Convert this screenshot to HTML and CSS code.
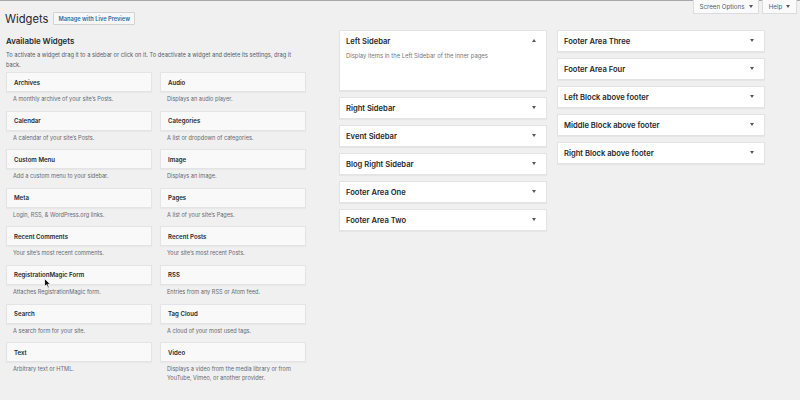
FILE: index.html
```html
<!DOCTYPE html>
<html>
<head>
<meta charset="utf-8">
<link rel="stylesheet" href="styles.css">
</head>
<body>
<div class="topline"></div>
<header class="header">
  <div class="title-group">
    <h1 class="page-title">Widgets</h1>
    <span class="live-btn">Manage with Live Preview</span>
  </div>
  <div class="meta-links">
    <span class="meta-btn screen-opt">Screen Options <i class="caret"></i></span>
    <span class="meta-btn help">Help <i class="caret"></i></span>
  </div>
</header>
<main class="layout">
  <section class="available">
    <h2 class="avail-title">Available Widgets</h2>
    <p class="avail-desc">To activate a widget drag it to a sidebar or click on it. To deactivate a widget and delete its settings, drag it back.</p>
    <div class="widget-grid">
      <div class="widget"><div class="w-card">Archives</div><div class="w-desc">A monthly archive of your site’s Posts.</div></div>
      <div class="widget"><div class="w-card">Audio</div><div class="w-desc">Displays an audio player.</div></div>
      <div class="widget"><div class="w-card">Calendar</div><div class="w-desc">A calendar of your site’s Posts.</div></div>
      <div class="widget"><div class="w-card">Categories</div><div class="w-desc">A list or dropdown of categories.</div></div>
      <div class="widget"><div class="w-card">Custom Menu</div><div class="w-desc">Add a custom menu to your sidebar.</div></div>
      <div class="widget"><div class="w-card">Image</div><div class="w-desc">Displays an image.</div></div>
      <div class="widget"><div class="w-card">Meta</div><div class="w-desc">Login, RSS, &amp; WordPress.org links.</div></div>
      <div class="widget"><div class="w-card">Pages</div><div class="w-desc">A list of your site’s Pages.</div></div>
      <div class="widget"><div class="w-card">Recent Comments</div><div class="w-desc">Your site’s most recent comments.</div></div>
      <div class="widget"><div class="w-card">Recent Posts</div><div class="w-desc">Your site’s most recent Posts.</div></div>
      <div class="widget"><div class="w-card">RegistrationMagic Form</div><div class="w-desc">Attaches RegistrationMagic form.</div></div>
      <div class="widget"><div class="w-card">RSS</div><div class="w-desc">Entries from any RSS or Atom feed.</div></div>
      <div class="widget"><div class="w-card">Search</div><div class="w-desc">A search form for your site.</div></div>
      <div class="widget"><div class="w-card">Tag Cloud</div><div class="w-desc">A cloud of your most used tags.</div></div>
      <div class="widget"><div class="w-card">Text</div><div class="w-desc">Arbitrary text or HTML.</div></div>
      <div class="widget"><div class="w-card">Video</div><div class="w-desc">Displays a video from the media library or from YouTube, Vimeo, or another provider.</div></div>
    </div>
  </section>
  <section class="sidebars">
    <div class="sb open">
      <div class="sb-head"><span>Left Sidebar</span><i class="arrow up"></i></div>
      <div class="sb-desc">Display items in the Left Sidebar of the inner pages</div>
    </div>
    <div class="sb"><div class="sb-head"><span>Right Sidebar</span><i class="arrow"></i></div></div>
    <div class="sb"><div class="sb-head"><span>Event Sidebar</span><i class="arrow"></i></div></div>
    <div class="sb"><div class="sb-head"><span>Blog Right Sidebar</span><i class="arrow"></i></div></div>
    <div class="sb"><div class="sb-head"><span>Footer Area One</span><i class="arrow"></i></div></div>
    <div class="sb"><div class="sb-head"><span>Footer Area Two</span><i class="arrow"></i></div></div>
  </section>
  <section class="sidebars">
    <div class="sb"><div class="sb-head"><span>Footer Area Three</span><i class="arrow"></i></div></div>
    <div class="sb"><div class="sb-head"><span>Footer Area Four</span><i class="arrow"></i></div></div>
    <div class="sb"><div class="sb-head"><span>Left Block above footer</span><i class="arrow"></i></div></div>
    <div class="sb"><div class="sb-head"><span>Middle Block above footer</span><i class="arrow"></i></div></div>
    <div class="sb"><div class="sb-head"><span>Right Block above footer</span><i class="arrow"></i></div></div>
  </section>
</main>
<svg class="cursor" width="8" height="11" viewBox="0 0 8 11"><path d="M0.5 0.5 L0.5 8.5 L2.5 6.8 L4 10 L5.3 9.4 L3.9 6.3 L6.5 6.3 Z" fill="#111" stroke="#fff" stroke-width="0.8"/></svg>
</body>
</html>
```
FILE: styles.css
```css
* { box-sizing: border-box; }
html, body { margin: 0; padding: 0; }
body {
  background: #f0f0f1;
  font-family: Inter, "Liberation Sans", Arial, sans-serif;
  color: #23282d;
  width: 800px;
  height: 400px;
  overflow: hidden;
  position: relative;
}
.topline { height: 1px; background: #a8a8a8; }
.header {
  display: flex;
  justify-content: space-between;
  align-items: flex-start;
  height: 29px;
}
.title-group {
  display: flex;
  align-items: center;
  gap: 5px;
  padding: 9px 0 0 5px;
}
.page-title {
  margin: 0;
  padding-top: 2px;
  font-size: 11.2px;
  font-weight: 400;
  line-height: 14px;
  color: #23282d;
}
.live-btn {
  display: inline-flex;
  align-items: center;
  height: 13px;
  padding: 0 4px;
  border: 1px solid #d2d2d4;
  background: #f7f7f7;
  color: #1e6fa8;
  font-size: 5.7px;
  font-weight: 600;
  border-radius: 1px;
}
.meta-links {
  display: flex;
  gap: 3px;
  padding-right: 3px;
  margin-top: -1px;
}
.meta-btn {
  display: inline-flex;
  align-items: center;
  justify-content: center;
  gap: 4px;
  height: 14px;
  background: #fafafa;
  border: 1px solid #dcdcde;
  border-top: none;
  color: #555d66;
  font-size: 6.2px;
}
.screen-opt { width: 66px; }
.help { width: 35px; }
.caret {
  display: inline-block;
  width: 0; height: 0;
  border-left: 2px solid transparent;
  border-right: 2px solid transparent;
  border-top: 3px solid #555;
}
.layout {
  display: flex;
  align-items: flex-start;
}
.available {
  width: 306px;
  padding-left: 6px;
  padding-top: 5px;
}
.avail-title {
  margin: 0;
  font-size: 7.9px;
  font-weight: 600;
  line-height: 12px;
  color: #23282d;
}
.avail-desc {
  margin: 3px 0 0;
  font-size: 5.7px;
  line-height: 9.5px;
  color: #555d66;
  width: 300px;
}
.widget-grid {
  display: grid;
  grid-template-columns: 146px 146px;
  column-gap: 8px;
  margin-top: 3px;
}
.widget { height: 38.6px; }
.w-card {
  height: 20px;
  background: #f9f9fa;
  border: 1px solid #e4e4e6;
  box-shadow: 0 1px 1px rgba(0,0,0,0.03);
  padding-left: 7px;
  display: flex;
  align-items: center;
  font-size: 6.1px;
  font-weight: 600;
  color: #23282d;
}
.w-desc {
  padding: 3px 7px 0;
  font-size: 5.6px;
  line-height: 8.7px;
  color: #666a70;
}
.sidebars {
  width: 208px;
  display: flex;
  flex-direction: column;
  gap: 6px;
}
.available + .sidebars { margin-left: 33px; }
.sidebars + .sidebars { margin-left: 10px; }
.sb {
  background: #fff;
  border: 1px solid #e3e3e5;
  box-shadow: 0 1px 1px rgba(0,0,0,0.04);
}
.sb.open { height: 61px; }
.sb-head {
  height: 20px;
  display: flex;
  align-items: center;
  justify-content: space-between;
  padding: 0 10px 0 6px;
  font-size: 7.6px;
  font-weight: 600;
  color: #23282d;
}
.sb-desc {
  padding: 1px 6px 0;
  font-size: 5.9px;
  color: #72777c;
}
.arrow {
  display: inline-block;
  width: 0; height: 0;
  border-left: 2px solid transparent;
  border-right: 2px solid transparent;
  border-top: 3px solid #555;
  margin-top: -2px;
}
.arrow.up {
  border-top: none;
  border-bottom: 3px solid #555;
}
.cursor {
  position: absolute;
  left: 44px;
  top: 278px;
}
```
